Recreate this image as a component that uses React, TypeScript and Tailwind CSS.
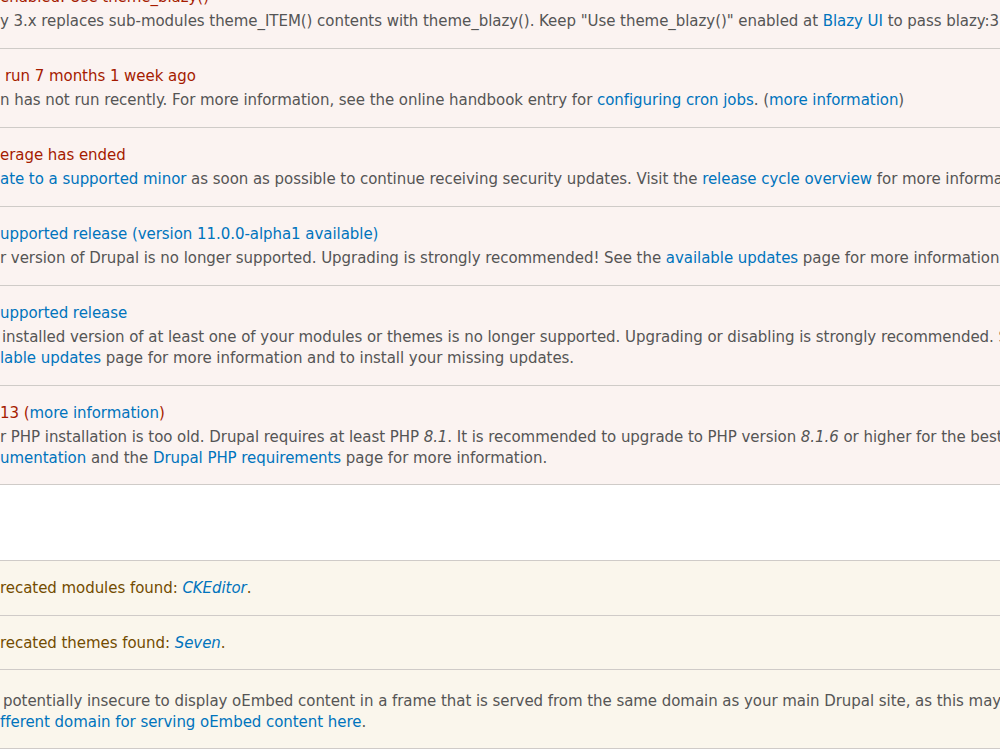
import React from 'react';

const link = 'text-[#0074bd]';

function Row({
  title,
  lines,
  tone = 'error',
  pad = 'pt-[17px] pb-4',
}: {
  title?: React.ReactNode;
  lines: React.ReactNode[];
  tone?: 'error' | 'warning';
  pad?: string;
}) {
  return (
    <div
      className={`border-b border-[#cfcbc8] ${tone === 'error' ? 'bg-[#fbf3f1]' : 'bg-[#faf6ec]'} ${pad}`}
    >
      {title && (
        <div
          className={`whitespace-nowrap leading-[21px] mb-[3px] ${
            tone === 'error' ? 'text-[#a51b00]' : 'text-[#734c00]'
          }`}
        >
          {title}
        </div>
      )}
      {lines.map((l, i) => (
        <div key={i} className="whitespace-nowrap leading-[21px] text-[#555555]">
          {l}
        </div>
      ))}
    </div>
  );
}

export default function App() {
  return (
    <div
      className="w-[1000px] h-[750px] overflow-hidden bg-white text-[15px] tracking-[-0.05px]"
      style={{ fontFamily: '"DejaVu Sans", "Lucida Grande", sans-serif' }}
    >
      <div className="-mt-[30px]">
        <Row
          title="enabled: Use theme_blazy()"
          lines={[
            <>
              y 3.x replaces sub-modules theme_ITEM() contents with theme_blazy(). Keep "Use theme_blazy()"
              enabled at <span className={link}>Blazy UI</span> to pass blazy:3.x tests.
            </>,
          ]}
        />
        <Row
          title={<span className="pl-[5px]">run 7 months 1 week ago</span>}
          lines={[
            <>
              n has not run recently. For more information, see the online handbook entry for{' '}
              <span className={link}>configuring cron jobs</span>. (<span className={link}>more information</span>)
            </>,
          ]}
        />
        <Row
          title="erage has ended"
          lines={[
            <>
              <span className={link}>ate to a supported minor</span> as soon as possible to continue receiving
              security updates. Visit the <span className={link}>release cycle overview</span> for more information.
            </>,
          ]}
        />
        <Row
          title={<span className={link}>upported release (version 11.0.0-alpha1 available)</span>}
          lines={[
            <>
              r version of Drupal is no longer supported. Upgrading is strongly recommended! See the{' '}
              <span className={link}>available updates</span> page for more information and to install
            </>,
          ]}
        />
        <Row
          title={<span className={link}>upported release</span>}
          lines={[
            <span className="pl-[2px]">
              installed version of at least one of your modules or themes is no longer supported. Upgrading or
              disabling is strongly recommended. See the
            </span>,
            <>
              <span className={link}>lable updates</span> page for more information and to install your missing
              updates.
            </>,
          ]}
        />
        <Row
          pad="pt-[17px] pb-[15px]"
          title={
            <>
              13 (<span className={link}>more information</span>)
            </>
          }
          lines={[
            <>
              r PHP installation is too old. Drupal requires at least PHP <em>8.1</em>. It is recommended to upgrade
              to PHP version <em>8.1.6</em> or higher for the best ongoing support.
            </>,
            <>
              <span className={link}>umentation</span> and the{' '}
              <span className={link}>Drupal PHP requirements</span> page for more information.
            </>,
          ]}
        />

        <div className="h-[75px] bg-white" />

        <div className="border-t border-[#cfcbc8]">
          <Row
            tone="warning"
            lines={[
              <span className="text-[#734c00]">
                recated modules found: <em className={link}>CKEditor</em>.
              </span>,
            ]}
          />
          <Row
            tone="warning"
            pad="pt-[17px] pb-[15px]"
            lines={[
              <span className="text-[#734c00]">
                recated themes found: <em className={link}>Seven</em>.
              </span>,
            ]}
          />
          <Row
            tone="warning"
            pad="pt-[21px] pb-[15px]"
            lines={[
              <span className="pl-[3px]">
                potentially insecure to display oEmbed content in a frame that is served from the same domain as
                your main Drupal site, as this may allow execution of third-party code.
              </span>,
              <>
                <span className={link}>fferent domain for serving oEmbed content here</span>.
              </>,
            ]}
          />
        </div>
      </div>
    </div>
  );
}
